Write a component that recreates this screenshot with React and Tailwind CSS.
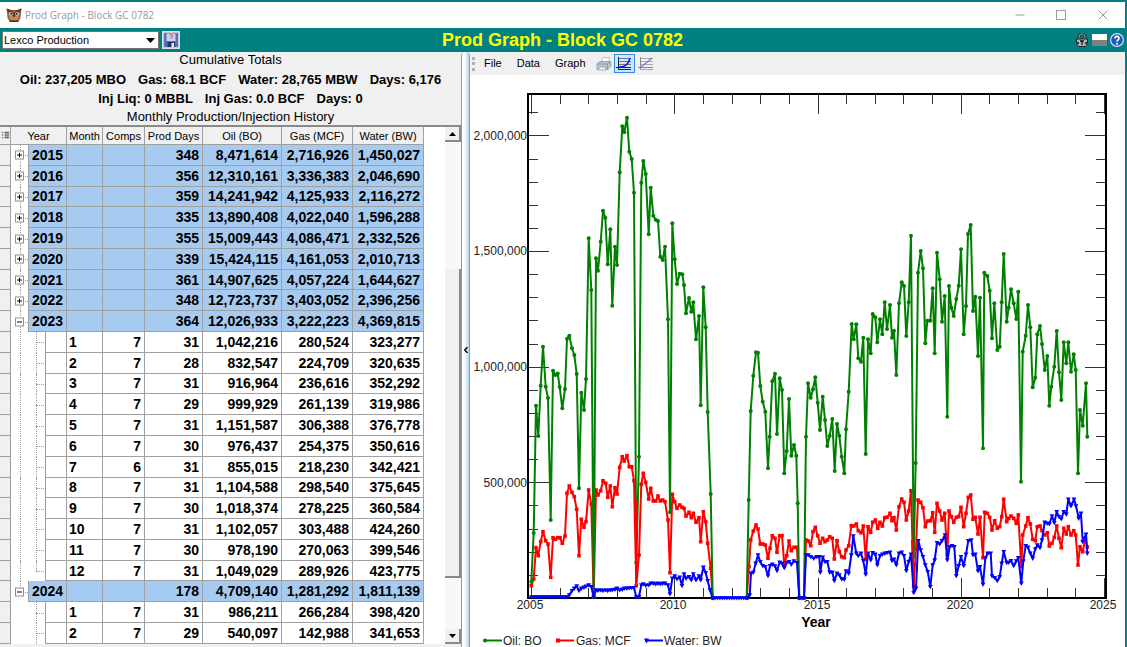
import React from 'react';
import { Minus, X } from 'lucide-react';

const years = [
  { year: '2015', days: 348, oil: '8,471,614', gas: '2,716,926', water: '1,450,027' },
  { year: '2016', days: 356, oil: '12,310,161', gas: '3,336,383', water: '2,046,690' },
  { year: '2017', days: 359, oil: '14,241,942', gas: '4,125,933', water: '2,116,272' },
  { year: '2018', days: 335, oil: '13,890,408', gas: '4,022,040', water: '1,596,288' },
  { year: '2019', days: 355, oil: '15,009,443', gas: '4,086,471', water: '2,332,526' },
  { year: '2020', days: 339, oil: '15,424,115', gas: '4,161,053', water: '2,010,713' },
  { year: '2021', days: 361, oil: '14,907,625', gas: '4,057,224', water: '1,644,627' },
  { year: '2022', days: 348, oil: '12,723,737', gas: '3,403,052', water: '2,396,256' },
  {
    year: '2023', days: 364, oil: '12,026,933', gas: '3,222,223', water: '4,369,815',
    months: [
      [1, 7, 31, '1,042,216', '280,524', '323,277'],
      [2, 7, 28, '832,547', '224,709', '320,635'],
      [3, 7, 31, '916,964', '236,616', '352,292'],
      [4, 7, 29, '999,929', '261,139', '319,986'],
      [5, 7, 31, '1,151,587', '306,388', '376,778'],
      [6, 7, 30, '976,437', '254,375', '350,616'],
      [7, 6, 31, '855,015', '218,230', '342,421'],
      [8, 7, 31, '1,104,588', '298,540', '375,645'],
      [9, 7, 30, '1,018,374', '278,225', '360,584'],
      [10, 7, 31, '1,102,057', '303,488', '424,260'],
      [11, 7, 30, '978,190', '270,063', '399,546'],
      [12, 7, 31, '1,049,029', '289,926', '423,775'],
    ],
  },
  {
    year: '2024', days: 178, oil: '4,709,140', gas: '1,281,292', water: '1,811,139', partial: true,
    months: [
      [1, 7, 31, '986,211', '266,284', '398,420'],
      [2, 7, 29, '540,097', '142,988', '341,653'],
    ],
  },
];

// Monthly points, "x,y" in chart units
const oilPoints = `531.3,581.7 533.7,533 536,405.7 538.3,436 540.7,385.7 543,346.7 545.7,386.7 548,398 550.7,520 553,370.7
555.3,375 557.7,373.5 559.7,387 562.3,408.3 565,389 567,338.7 569.3,335.7 572,348.3 574.3,355 576.7,374
579,488.3 581.3,392.7 584,410 586,379 588.7,238.3 591.3,290 593.7,597 596,258.3 598,270.7 600.7,241.7
603,210.7 605.3,217.7 607.7,264.3 610.3,229.3 612.3,305.7 615,246.7 617,265 619.7,172.3 622.3,126.3 624.3,132.3
627,117.7 629.3,151.7 631.7,159 634,192.7 636.3,562.7 639,456.7 641.3,182.7 643.3,161 645.7,174 648.7,234.3
650.7,187.7 653.3,215.7 655.7,219.7 658,221 660.3,256.7 662.7,260 665,246.7 668,319.3 670,512.3 672.3,223.3
674.7,259.3 677,284 679.7,273.7 682.3,274.3 684,285 686,313.3 689,298 691.3,311.7 693.3,302.3 696,339.3
699,316 700.7,405.3 703.3,287.3 705.7,327.3 707.7,412 710.7,494 712.7,598 746.7,598 748.7,500 750.7,411
753.3,375.7 756,352.3 758,352.7 760.3,386 762.7,401.7 765.3,411.7 768,468.3 769.7,436.7 772.3,381.3 775,373.7
777,434 779.7,378.3 782,390 784.3,473.3 786.7,451 789,399 791.3,455.7 794,445 796.3,455.7 797.7,503.3
799.3,598 804,598 806,436.7 808,383.3 810.7,397.7 813,389.3 815.3,377.3 817.7,402.7 820,430 822.7,396.7
825,420 827.3,446 829.7,435.7 832.3,419 834.7,471 837,424 839.3,435.7 841.7,456.7 844.3,473.3 846,429.3
848.7,391.7 851.7,324 853.7,339.3 856.3,324.3 858.3,358.3 861,361.7 863.3,337.7 865.7,454 868,339.3 870.7,353.3
872.7,314 875.3,317.3 877.3,342.3 880,319.3 882.3,334.3 884.7,302.3 887,329 890,305 892,337.7 894,330.7
896.3,375 899,303.3 901.7,282.3 904,286 906.3,336 908.7,302.3 911,235.7 913.7,556.7 915.7,463 918,272.7
920.7,251 923,268.3 925.3,343.3 927.3,320.7 930.3,320.7 932.7,288.3 934.7,353.3 937,252.7 939.7,279.3 942,321.7
944.7,296 947.3,416.7 949,286 951.3,307.7 953.7,316 956.3,299 958.7,285.7 961,249.3 963.7,334.3 966,306
968,234 970.7,225 973,311 975.3,296.7 978,356 980,297.7 983,448.3 984.3,272.7 987.3,276 989.7,290.7
992,338.3 994.3,303.3 997.3,350 999.7,346.7 1001.7,302.3 1003.7,254 1006.7,321.7 1008.7,307.7 1011,289.3 1013.7,303.3
1016.3,319 1018.3,291.7 1021,481.7 1022.7,351.7 1025.7,335.7 1028,305 1030.3,327.3 1032.7,387.3 1035.3,377.7 1037.3,334.3
1040,326 1042,344 1044.7,370 1047.3,356 1049.3,405.7 1051.3,386.7 1054.3,366.7 1056.7,331 1059,372.3 1061.3,400
1063.7,342.3 1066.3,363.3 1068.3,342.3 1071,371.7 1073.7,354.3 1075.7,370 1078,473.3 1080,410 1082.7,425.7 1086,383.3
1087.3,436.7`;

const gasPoints = `531.3,585.7 533.7,579 536,547.7 538.3,555.7 540.7,541.7 543,531.7 545.7,540.7 548,544 550.7,577.3 553,537.7
555.3,539.3 557.7,537.7 560,537.7 562.3,543.3 565,536 567,493.3 569.3,486 572,492.3 574.3,496.7 576.7,509.3
579,555.7 581.3,519.3 584,527.3 586,521.7 588.7,490 591.3,504.3 593.7,597 596,490 598,495 600.7,490.7
603,480.7 605.7,483.3 607.7,497.3 610.3,486 612.3,506.7 615,487.7 617,494 619.7,467.3 622.3,456.7 624.3,461
627,455.7 629.3,466.7 631.7,466.7 634,480.7 636.3,585.7 639,555 641.3,484.3 643.3,473.3 645.7,482.3 648.7,499
650.7,488.3 653.3,501 655.7,501 658,496 660.3,501 662.7,500 665,501.7 668,520 670,572.7 672.3,494.3
674.7,501.7 677,508.3 679.7,505 682,507.3 684,508.3 686,516 689,512.3 691.3,517.7 693.3,513.3 696,522.3
699,517.7 700.7,541.7 703.3,511.7 705.7,521.7 707.7,543.3 710.7,568.3 712.7,598 746.7,598 749,566.7 750.7,540
753.3,531 756,525 758,529 760.3,544 762.7,544 765.3,545 768,558.3 770,548.3 772.3,535.7 775,538.3
777,552.3 779.7,535.7 782,535.7 784.3,564.3 786.7,555.7 789,541 791.3,550.7 794,547.3 797,547.3 799.3,598
804,598 806,540 808.3,541 810.7,545.7 813,531.7 815.3,527.3 817.7,535.7 820,543.3 822.7,538.3 825,541.7
827.3,540 829.7,536.7 832.3,538.3 834.3,559 837,540.7 839.3,551.7 841.7,556.7 844.3,557.7 846,550 848.7,545.7
851.3,525.7 853.7,526 856.3,524 858.3,530.7 861,532.7 863.3,526 865.7,559.3 868,526.7 870.7,532.3 872.7,522.3
875.3,520 877.7,528.3 880,522.3 882.3,526 884.7,517.7 887,517.3 890,513.3 892,520.7 894,517.7 896.3,530
899,506.7 901.7,499 904,502.3 906.3,520 908.7,511 911,490.7 913.7,586 916,548.3 918,500 920.7,502.3
923,507.7 925.3,526.7 927.7,521 930.3,520.7 932.7,512.7 934.7,532.3 937,503.3 939.7,511 942,520 944.7,513.3
947.3,555 949,511 951.3,516.7 953.7,522.3 956.3,517.3 958.7,516.7 961,507.3 963.7,526.7 966,513.3 968.3,497.3
970.7,495 973,519.3 975.3,517.3 978,534 980,517.3 983,557.7 984.7,512.3 987.3,513.3 989.7,517.3 992,530
994.7,520.7 997.3,528.3 999.7,526.7 1001.7,516.7 1003.7,499.3 1006.7,521.7 1008.7,518.3 1011,516 1013.7,518.3 1016.3,523.3
1018.3,515 1021.3,566.7 1022.7,535 1025.7,526 1028,517.7 1030.3,524 1032.7,539.3 1035.3,540.7 1037.3,526.7 1040,526
1042,530.7 1044.7,535 1047.3,532.7 1049.3,546 1052,543.3 1054.3,537.3 1056.7,526 1059,538.3 1061.3,547.7 1063.7,528.3
1066.3,534 1068.3,526.7 1071,535 1073.7,530.7 1075.7,535 1078,565 1080,546.7 1082.7,551.7 1085.3,538 1087.3,547`;

const waterPoints = `531.3,597 533.7,597 536,597 538.3,597 540.7,597 543,597 545.7,597 548,597 550.7,597 553,597
555.3,597 557.7,597 560,597 562.3,597 565,597 567,597 569.3,595 572,590.7 574.3,588.3 576.7,586
579,590.7 581.3,588.3 584,587.3 586,586.3 588.7,585 591.3,586.7 593.7,597 596,590 598,590.5 600.7,590
603,590.7 605.7,590 607.7,590.7 610.3,590 612.3,590 615,589.3 617,588.3 619.7,590 622.3,589.3 624.3,588.3
627,588.3 629.3,588 631.7,587.7 634,587.7 636.3,597 639,596.7 641.3,585 643.3,584 645.7,585.3 648.7,585
650.7,583.3 653.3,583.3 655.7,584 658,583.3 660.3,584 662.7,583.3 665,583.3 668,585 670,594 672.3,578.3
674.7,576 677,579 679.7,577.3 682,585.7 684,574 686,578.3 689,576.7 691.3,580 693.3,574 696,580
699,576 700.7,580 703.3,567.3 705.7,572.7 707.7,580.7 710,590 712.7,598 715,598 717.4,598 719.8,598
722.2,598 724.6,598 727,598 729.4,598 731.8,598 734.2,598 736.6,598 739,598 741.4,598 743.8,598
747.7,598 749.7,595 751,573.3 753.3,572.3 755.7,563.3 758,555 760.3,561.7 762.7,565.7 765.3,566.7 768,575.7
770,565.7 772.3,564.3 775,566 777,570.7 779.7,562.3 782,563.3 784.3,567.7 786.7,562.7 789,561.7 791.3,564.3
794,561 797,562.7 799.3,598 801.7,598 804,598 806,555 808.3,555 810.7,556.7 813.7,558.3 816.7,556.7
819.3,556.7 820.3,572.3 822.7,557.3 825,561.7 827.3,561.7 829.7,572.3 832.3,572.3 834.3,580.7 837,573.3 839.3,575
841.7,579 844.3,579.3 846,571 848.7,573.3 851.3,555 853.3,536 856.3,553.3 858.3,555.7 861,553.3 863.3,560.7
865.7,574.3 868,553.3 870.7,560 872.7,552.7 875.3,554.3 877.3,565 880,555.7 882.3,554.3 884.7,553.3 887,552.7
890,552.3 892,560.7 894,559.3 896.3,565 899,553.3 901.7,552.3 904,555.7 906.3,570.7 908.7,561.7 911,554.3
913.7,592.7 916,588.3 918.3,540.7 920.7,550 923,556.7 925.3,565 927.7,571.7 930.3,586.7 932.7,565 934.7,560
937,542.7 939.7,544 942,540.7 945,535 947.3,560 949.7,546.7 952,545.7 954.3,546.7 956.3,575.7 958.7,565.7
961,556.7 963.7,565.7 966,554.3 968.3,540.7 971.3,540 973,555 975.3,554.3 978,571 980,566.7 983,584.3
985.3,558.3 987.7,553.3 990.7,553.3 992,576 994.7,577.7 997.3,580.7 999.7,576.7 1001.7,563.3 1003.7,551.7 1006.7,562.7
1008.7,562.3 1011,560.7 1013.7,565.7 1016.3,561 1018.3,557.7 1021.3,583.3 1023.3,561 1025.7,545.7 1028,547.3 1030.3,553.3
1032.7,558.3 1035.3,549 1037.3,545 1040,547.7 1042,540 1044.7,522.3 1047.3,523.3 1049.3,524 1052,516 1054.3,522.7
1056.7,511.7 1059,516.7 1061.3,519 1063.7,511.7 1066.3,514.3 1068.3,499.3 1071,506 1074,499.3 1076,506 1078.7,518.3
1081,513.3 1082.7,541.7 1086,534.3 1087.3,553.3`;

const toPairs = (points) => points.split(/\s+/).map((p) => p.split(',').map(Number));

const Series = ({ points, color, shape }) => (
  <g fill={color}>
    <polyline points={points} fill="none" stroke={color} strokeWidth="2" strokeLinejoin="round" />
    {toPairs(points).map(([x, y], i) => {
      if (shape === 'circle') return <circle key={i} cx={x} cy={y} r="2" />;
      if (shape === 'square') return <rect key={i} x={x - 1.8} y={y - 1.8} width="3.6" height="3.6" />;
      return <path key={i} d={`M${x - 2.4} ${y - 1.7}h4.8L${x} ${y + 2.6}z`} />;
    })}
  </g>
);

const Chart = () => {
  const xTicks = Array.from({ length: 21 }, (_, i) => i);
  const yTicks = Array.from({ length: 21 }, (_, i) => i + 1);
  return (
    <svg viewBox="470 75 655 572" className="h-full w-full font-['Liberation_Sans',sans-serif]" role="img" aria-label="Production by year">
      <g stroke="#333" strokeWidth="1">
        {xTicks.map((i) => {
          const x = Math.round(531 + i * 28.65) + 0.5;
          const len = i % 5 === 0 ? 20 : 10;
          return <path key={i} d={`M${x} 94v${len}M${x} 598v${-len}`} />;
        })}
        {yTicks.map((i) => {
          const y = Math.round(598 - i * 23.13) + 0.5;
          const len = i % 5 === 0 ? 21 : 10;
          return <path key={i} d={`M528 ${y}h${len}M1106 ${y}h${-len}`} />;
        })}
      </g>
      <rect x="528" y="94" width="578" height="504" fill="none" stroke="#000" strokeWidth="2" />
      <Series points={gasPoints} color="#f00" shape="square" />
      <Series points={oilPoints} color="#008000" shape="circle" />
      <polyline points="636.3,585 636.3,500" stroke="#f00" strokeWidth="2" />
      <polyline points="913.7,586 912,540" stroke="#f00" strokeWidth="2" />
      <Series points={waterPoints} color="#00f" shape="triangle" />

      <g fontSize="12" fill="#222" textAnchor="end">
        <text x="527" y="140">2,000,000</text>
        <text x="527" y="255">1,500,000</text>
        <text x="527" y="371">1,000,000</text>
        <text x="527" y="487">500,000</text>
      </g>
      <g fontSize="12" fill="#222" textAnchor="middle">
        <text x="530" y="609">2005</text>
        <text x="673" y="609">2010</text>
        <text x="817" y="609">2015</text>
        <text x="960" y="609">2020</text>
        <text x="1103" y="609">2025</text>
      </g>
      <text x="816" y="627" fontSize="14" fontWeight="bold" textAnchor="middle">Year</text>

      <g fontSize="12" fill="#222">
        <path d="M484 640.5h18" stroke="#008000" strokeWidth="2" />
        <circle cx="485" cy="640.5" r="2" fill="#008000" />
        <text x="503" y="645">Oil: BO</text>
        <path d="M556 640.5h18" stroke="#f00" strokeWidth="2" />
        <rect x="556" y="638.5" width="4" height="4" fill="#f00" />
        <text x="576" y="645">Gas: MCF</text>
        <path d="M645 640.5h18" stroke="#00f" strokeWidth="2" />
        <path d="M644 638.5h5l-2.5 5z" fill="#00f" />
        <text x="664" y="645">Water: BW</text>
      </g>
    </svg>
  );
};

const OwlIcon = () => (
  <svg viewBox="0 0 16 16" className="h-4 w-4 shrink-0">
    <path d="M.5 1.500l3.500 1.500h8l3.500-1.500-.5 4.500-.5 5-2 3.500h-9L1.500 11 1 6z" fill="#9a6240" />
    <path d="M.5 1.500L5 3l3 3 3-3 4.500-1.500-1 3-3 2.500h-7l-3-2.500z" fill="#5f3a26" />
    <path d="M3 9.500l2.500-1 2.500 2 2.500-2 2.500 1-1.500 4h-7z" fill="#c08a62" />
    <circle cx="4.800" cy="6.800" r="1.900" fill="#ead2b4" />
    <circle cx="11.200" cy="6.800" r="1.900" fill="#ead2b4" />
    <circle cx="5.200" cy="6.800" r="1" fill="#222" />
    <circle cx="10.800" cy="6.800" r="1" fill="#222" />
    <path d="M7 7.500h2l-1 3z" fill="#3b2519" />
    <path d="M3.500 14.200h9" stroke="#4a2d1d" strokeWidth="1.500" />
  </svg>
);

const SaveIcon = () => (
  <svg viewBox="0 0 14 14" className="h-3.5 w-3.5">
    <rect x="0" y="0" width="14" height="14" rx="1" fill="#5a70bd" />
    <rect x="2.500" y="0.500" width="9" height="7.500" fill="#c4d4f3" />
    <path d="M5.500 2.500q1.300-1.500 2.800-.4 1 1.500-1.300 2.700v1" fill="none" stroke="#d86a7c" strokeWidth="1.300" />
    <rect x="3.500" y="9" width="7.500" height="5" fill="#27336f" />
    <rect x="7.500" y="10" width="2.500" height="4" fill="#e6ecfa" />
  </svg>
);

const LockIcon = () => (
  <svg viewBox="0 0 14 14" className="h-3.5 w-3.5">
    <path d="M4 7V3.800a3 3 0 0 1 6 0V7" fill="none" stroke="#222" strokeWidth="2.600" />
    <path d="M4 7V3.800a3 3 0 0 1 6 0V7" fill="none" stroke="#aaa" strokeWidth="1" />
    <path d="M1.500 6h11v4.500l-2 3h-7l-2-3z" fill="#b5b5b5" stroke="#222" />
    <path d="M5 8h4M7 8v4M2 10h2M10 10h2" stroke="#111" strokeWidth="1.300" />
  </svg>
);

const HelpIcon = () => (
  <svg viewBox="0 0 14 14" className="h-3.5 w-3.5">
    <circle cx="7" cy="7" r="6.400" fill="#2458b8" stroke="#cfe0f8" strokeWidth="1.200" />
    <path d="M5 5.500a2 2 0 1 1 3 1.600q-1 .6-1 1.500" fill="none" stroke="#fff" strokeWidth="1.700" />
    <circle cx="7" cy="10.700" r="1" fill="#fff" />
  </svg>
);

const PrinterIcon = () => (
  <svg viewBox="0 0 16 14" className="h-3.5 w-4">
    <path d="M5 5l2-4.500h7L12 6z" fill="#fff" stroke="#a5b4c4" strokeWidth=".8" />
    <path d="M1 7l3-2.500h10.500L15 9l-3 3.500H1z" fill="#bac6d3" stroke="#8595a7" strokeWidth=".8" />
    <path d="M1 7h10.500L14.500 5M11.500 7v5" fill="none" stroke="#7f8fa1" strokeWidth=".8" />
    <path d="M3 10h6.500v3H2.500z" fill="#f7f9fb" stroke="#8c9aaa" strokeWidth=".8" />
  </svg>
);

const CurveIcon = () => (
  <svg viewBox="0 0 16 14" className="h-3.5 w-4 shrink-0">
    <path d="M2 1.500h13M2 4.500h13M2 7.500h13" stroke="#777" strokeWidth="1" />
    <path d="M2.500 0v12M0 10.500h15M2 12.500h13" stroke="#222" strokeWidth="1" />
    <path d="M3 10q9 .5 11-9" fill="none" stroke="#11f" strokeWidth="1.500" />
  </svg>
);

const LineIcon = () => (
  <svg viewBox="0 0 16 14" className="h-3.5 w-4">
    <path d="M2 1.500h13M2 4.500h13M2 7.500h13M2 12.500h13" stroke="#aaa" strokeWidth="1" />
    <path d="M2.500 0v12M0 10.500h15" stroke="#888" strokeWidth="1" />
    <path d="M2 11L14 1" stroke="#77e" strokeWidth="1.200" />
  </svg>
);

const cell = 'border-r border-b border-[#a0a0a0] px-[3px] py-0 leading-4 text-right';

const Gutter = () => <td className="border-r border-b border-[#a0a0a0] bg-[#f0f0f0] p-0" />;

const YearRow = ({ row }) => (
  <tr className="bg-[#a6caf0]">
    <Gutter />
    <td className="relative bg-white p-0">
      <span className={`absolute top-0 left-[9px] border-l border-dotted border-[#999] ${row.partial ? 'h-1/2' : 'h-full'}`} />
      <span className="absolute top-1/2 left-[9px] w-2 border-t border-dotted border-[#999]" />
      <button aria-label={`Toggle ${row.year}`} className="absolute top-1/2 left-1 flex size-[9px] -translate-y-1/2 items-center justify-center border border-[#919191] bg-white">
        <svg viewBox="0 0 5 5" className="size-[5px] shrink-0">
          <path d={row.months ? 'M0 2.5h5' : 'M0 2.5h5M2.5 0v5'} stroke="#000" />
        </svg>
      </button>
    </td>
    <td colSpan={2} className={`${cell} border-l`}>{row.year}</td>
    <td className={cell} />
    <td className={cell} />
    <td className={cell}>{row.days}</td>
    <td className={cell}>{row.oil}</td>
    <td className={cell}>{row.gas}</td>
    <td className={cell}>{row.water}</td>
  </tr>
);

const MonthRow = ({ values, trunk, last }) => (
  <tr>
    <Gutter />
    <td className="relative p-0">
      {trunk && <span className="absolute top-0 left-[9px] h-full border-l border-dotted border-[#999]" />}
    </td>
    <td className="relative p-0">
      <span className={`absolute top-0 left-2 border-l border-dotted border-[#999] ${last ? 'h-1/2' : 'h-full'}`} />
      <span className="absolute top-1/2 left-2 w-2 border-t border-dotted border-[#999]" />
    </td>
    <td className={`${cell} border-l`} />
    <td className={`${cell} pl-0.5! text-left!`}>{values[0]}</td>
    {values.slice(1).map((v, i) => (
      <td key={i} className={cell}>{v}</td>
    ))}
  </tr>
);

const HistoryTable = () => (
  <table className="h-full w-[424px] table-fixed border-separate border-spacing-0 text-sm font-bold">
    <colgroup>
      <col className="w-[11px]" />
      <col className="w-[17px]" />
      <col className="w-[17px]" />
      <col className="w-[22px]" />
      <col className="w-9" />
      <col className="w-[42px]" />
      <col className="w-[58px]" />
      <col className="w-[79px]" />
      <col className="w-[71px]" />
      <col className="w-[71px]" />
    </colgroup>
    <thead>
      <tr className="h-[18px] bg-[#f0f0f0] text-[11px] leading-4 font-normal whitespace-nowrap">
        <th aria-label="Row menu" className="border-r border-b border-[#a0a0a0] p-0">
          <svg viewBox="0 0 10 10" className="mx-auto size-[9px]">
            <path d="M1 1.500h1.500M1 4.500h1.500M1 7.500h1.500M4 1.500h5M4 3.500h5M4 5.500h5M4 7.500h5" stroke="#333" />
          </svg>
        </th>
        <th colSpan={3} className="border-r border-b border-[#a0a0a0] p-0 font-normal">Year</th>
        {['Month', 'Comps', 'Prod Days', 'Oil (BO)', 'Gas (MCF)', 'Water (BW)'].map((h) => (
          <th key={h} className="border-r border-b border-[#a0a0a0] p-0 font-normal">{h}</th>
        ))}
      </tr>
    </thead>
    <tbody>
      {years.map((row) => (
        <React.Fragment key={row.year}>
          <YearRow row={row} />
          {row.months?.map((values, i) => (
            <MonthRow key={i} values={values} trunk={!row.partial} last={!row.partial && i === row.months.length - 1} />
          ))}
        </React.Fragment>
      ))}
    </tbody>
  </table>
);

const ScrollButton = ({ label, up }) => (
  <button aria-label={label} className="flex h-[15px] w-full shrink-0 items-center justify-center border-r-2 border-b-2 border-[#8a8a8a] bg-[#f0f0f0]">
    <svg viewBox="0 0 7 4" className="h-1 w-[7px]">
      <path d={up ? 'M0 4h7L3.500 0z' : 'M0 0h7L3.500 4z'} />
    </svg>
  </button>
);

const ProductionPanel = () => (
  <section className="flex w-[461px] shrink-0 flex-col bg-[#f0f0f0]">
    <div className="text-center text-[13px] whitespace-pre text-black">
      <h2 className="leading-4">Cumulative Totals</h2>
      <p className="flex justify-center gap-3 leading-6 font-bold">
        <span>Oil: 237,205 MBO</span>
        <span>Gas: 68.1 BCF</span>
        <span>Water: 28,765 MBW</span>
        <span>Days: 6,176</span>
      </p>
      <p className="flex justify-center gap-3 leading-[14px] font-bold">
        <span>Inj Liq: 0 MBBL</span>
        <span>Inj Gas: 0.0 BCF</span>
        <span>Days: 0</span>
      </p>
      <h2 className="mt-[3px] leading-4">Monthly Production/Injection History</h2>
    </div>
    <div className="mb-[3px] flex min-h-0 flex-1 justify-between border-t-2 border-[#8a8a8a] bg-white">
      <HistoryTable />
      <div className="flex w-4 flex-col bg-[#f8f8f8]">
        <ScrollButton label="Scroll up" up />
        <div className="grow-128" />
        <div className="grow-309 border-r-2 border-b-2 border-[#8a8a8a] bg-[#f0f0f0]" />
        <div className="grow-51" />
        <ScrollButton label="Scroll down" />
      </div>
    </div>
  </section>
);

const GraphPanel = () => (
  <section className="flex min-w-0 flex-1 flex-col bg-white">
    <nav className="flex h-[23px] shrink-0 items-center bg-[#f0f0f0] pl-0.5 text-[11px]">
      <span className="mr-2 h-3.5 w-1 border-l-3 border-dotted border-[#b0b0b0]" />
      <button className="mr-[15px]">File</button>
      <button className="mr-[15px]">Data</button>
      <button className="mr-2.5">Graph</button>
      <button aria-label="Print" className="mr-0.5"><PrinterIcon /></button>
      <button aria-label="Curve" className="mr-[3px] flex h-[19px] w-[21px] items-center justify-center border border-[#2d8ceb] bg-[#cde6fb]">
        <CurveIcon />
      </button>
      <button aria-label="Line"><LineIcon /></button>
    </nav>
    <div className="min-h-0 flex-1">
      <Chart />
    </div>
  </section>
);

export default function App() {
  return (
    <div className="flex h-screen flex-col overflow-hidden border-t-2 border-r-2 border-[#008080] bg-white font-['Liberation_Sans',Arial,sans-serif] text-black">
      <header className="flex h-[26px] shrink-0 items-center pl-1.5 text-[#999]">
        <OwlIcon />
        <h1 className="ml-[3px] font-['Open_Sans',sans-serif] text-[10px]">Prod Graph - Block GC 0782</h1>
        <div className="mr-3.5 ml-auto flex items-center gap-[29px]">
          <button aria-label="Minimize"><Minus size={14} strokeWidth={2} /></button>
          <button aria-label="Maximize" className="size-2.5 border border-[#999]" />
          <button aria-label="Close"><X size={16} strokeWidth={1.5} /></button>
        </div>
      </header>

      <div className="relative flex h-6 shrink-0 items-center bg-[#008080] pr-px pl-0.5">
        <div className="relative flex items-center">
          <select aria-label="Production source" className="h-[18px] w-[157px] appearance-none border border-[#777] bg-white pl-px text-[11px] leading-4">
            <option>Lexco Production</option>
          </select>
          <svg viewBox="0 0 9 5" className="pointer-events-none absolute right-1 h-[5px] w-[9px]">
            <path d="M0 0h9L4.500 5z" />
          </svg>
        </div>
        <button aria-label="Save" className="ml-[3px] flex size-[18px] items-center justify-center border border-[#ddd] bg-[#c8c8d0]">
          <SaveIcon />
        </button>
        <h2 className="pointer-events-none absolute inset-x-0 text-center text-lg leading-6 font-bold text-[#ff0]">Prod Graph - Block GC 0782</h2>
        <div className="relative ml-auto flex items-center gap-[3px]">
          <button aria-label="Lock"><LockIcon /></button>
          <button aria-label="Split view" className="h-3 w-[15px] border-b-6 border-[#808080] bg-white" />
          <button aria-label="Help"><HelpIcon /></button>
        </div>
      </div>

      <main className="flex min-h-0 flex-1">
        <ProductionPanel />
        <div className="flex w-[9px] shrink-0 items-center justify-center rounded-t-sm border-x border-[#999] bg-linear-to-r from-white from-30% to-[#b5d7ea]">
          <svg viewBox="0 0 4 6" className="h-1.5 w-1">
            <path d="M3.500 0L.8 3l2.700 3" fill="none" stroke="#000" strokeWidth="1.400" />
          </svg>
        </div>
        <GraphPanel />
      </main>
    </div>
  );
}
